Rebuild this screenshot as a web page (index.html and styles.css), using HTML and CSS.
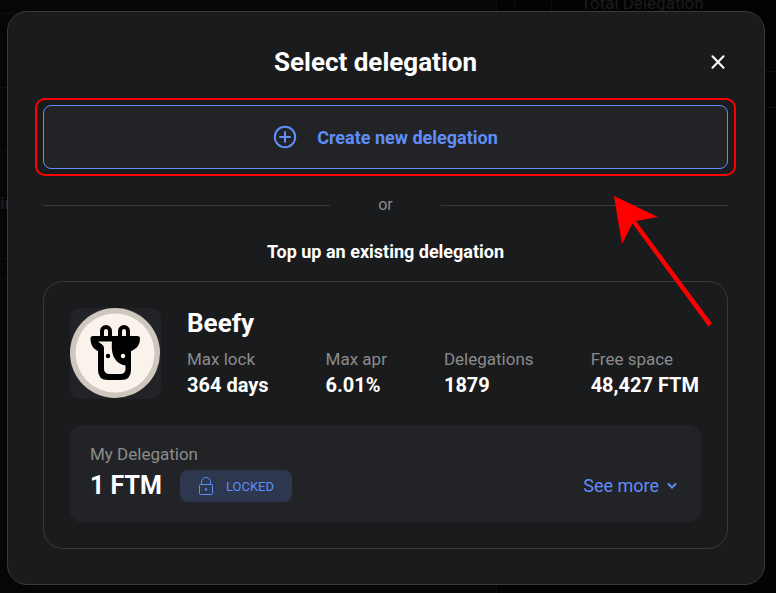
FILE: index.html
```html
<!DOCTYPE html>
<html lang="en">
<head>
    <meta charset="UTF-8">
    <meta name="viewport" content="width=device-width, initial-scale=1.0">
    <title>Select delegation</title>
    <link rel="stylesheet" href="styles.css">
</head>
<body>
    <!-- Dimmed page -->
    <main class="page">
        <div class="page-left">
            <div class="page-row tall"></div>
            <div class="page-row"></div>
            <div class="page-row cell">in</div>
            <div class="page-row"></div>
        </div>
        <div class="page-right">
            <div class="page-panel">
                <div class="page-total">Total Delegation</div>
                <div class="page-line"></div>
            </div>
        </div>
    </main>

    <!-- Modal -->
    <div class="overlay">
        <section class="modal" role="dialog" aria-labelledby="modalTitle">
            <header class="modal-header">
                <h1 id="modalTitle">Select delegation</h1>
                <button class="close-btn" aria-label="Close">
                    <svg width="14" height="14" viewBox="0 0 14 14" fill="none" stroke="#fff" stroke-width="2" stroke-linecap="round">
                        <path d="M1.5 1.2 12.5 12.8M12.5 1.2 1.5 12.8"/>
                    </svg>
                </button>
            </header>

            <div class="highlight">
                <button class="create-btn">
                    <svg width="24" height="24" viewBox="0 0 24 24" fill="none" stroke="currentColor" stroke-width="2" stroke-linecap="round">
                        <circle cx="12" cy="12" r="10.2"/>
                        <path d="M12 7v10M7 12h10"/>
                    </svg>
                    Create new delegation
                </button>
            </div>

            <div class="divider">or</div>

            <h2 class="subtitle">Top up an existing delegation</h2>

            <article class="card">
                <div class="validator">
                    <div class="logo">
                        <svg viewBox="0 0 91 91">
                            <circle cx="45" cy="45" r="45" fill="#cec7be"/>
                            <circle cx="45" cy="45" r="39.5" fill="#faf3ec"/>
                            <path d="M32 30V23a4 4 0 0 1 8 0V30M50 30V23a4 4 0 0 1 8 0V30" fill="none" stroke="#000" stroke-width="4"/>
                            <path d="M23 28H67.5a2.5 2.5 0 0 1 2.5 2.5C70 37 66.500 41 61 43V62Q61 72 51 72H38Q28 72 28 62V43C23.5 41 20.5 37 20.5 30.5A2.5 2.5 0 0 1 23 28Z"/>
                            <path d="M28 33.500H42C41 44 43 55 55.500 57.500V61Q55.500 66 50 66H40Q34 66 34 61V40C34 37 31 36 28 33.500Z" fill="#faf3ec"/>
                            <circle cx="38" cy="48" r="2.2"/>
                            <circle cx="53" cy="48" r="2.2" fill="#faf3ec"/>
                        </svg>
                    </div>
                    <div class="info">
                        <h3>Beefy</h3>
                        <dl class="stats">
                            <div><dt>Max lock</dt><dd>364 days</dd></div>
                            <div><dt>Max apr</dt><dd>6.01%</dd></div>
                            <div><dt>Delegations</dt><dd>1879</dd></div>
                            <div><dt>Free space</dt><dd>48,427 FTM</dd></div>
                        </dl>
                    </div>
                </div>

                <div class="my-delegation">
                    <div>
                        <div class="label">My Delegation</div>
                        <div class="amount">
                            <strong>1 FTM</strong>
                            <span class="badge">
                                <svg width="16" height="20" viewBox="0 0 16 20" fill="none" stroke="currentColor">
                                    <rect x="1.5" y="8.5" width="13" height="10" rx="1"/>
                                    <path d="M3.5 8.5V6a4.5 4.5 0 0 1 9 0V8.500"/>
                                    <circle cx="8" cy="13.500" r="1.2" fill="currentColor" stroke="none"/>
                                </svg>
                                LOCKED
                            </span>
                        </div>
                    </div>
                    <button class="more-btn">
                        See more
                        <svg width="10" height="8" viewBox="0 0 10 8" fill="none" stroke="currentColor" stroke-width="2" stroke-linecap="round">
                            <path d="M1.5 2 5 5.5 8.5 2"/>
                        </svg>
                    </button>
                </div>
            </article>

            <!-- Arrow pointing at the button -->
            <svg class="arrow" width="99" height="131" viewBox="0 0 99 131">
                <path d="M0 0 44 21 22 25 98 127.5 94.5 130.5 18.5 27.5 8 48Z" fill="#f00"/>
            </svg>
        </section>
    </div>
</body>
</html>
```
FILE: styles.css
```css
* {
    box-sizing: border-box;
}

body {
    margin: 0;
    min-height: 100vh;
    background-color: #030304;
    color: #fff;
    font-family: Roboto, "Liberation Sans", sans-serif;
    position: relative;
    overflow: hidden;
}

h1, h2, h3, dl, dd {
    margin: 0;
}

button {
    background: none;
    border: none;
    padding: 0;
    font-family: inherit;
    cursor: pointer;
}

svg {
    display: block;
    flex: none;
}

/* Dimmed page */
.page {
    display: flex;
    min-height: 100vh;
    color: #1c1c1d;
    font-size: 17px;
}

.page-left {
    flex: 0 0 64%;
    padding-top: 13px;
    background-color: #050607;
    border-right: 1px solid #0e0e0f;
}

.page-row {
    height: 63px;
    border-top: 1px solid #0e0e0f;
}

.page-row.tall {
    height: 74px;
}

.page-row.cell {
    height: 109px;
    margin-bottom: 19px;
    padding-top: 42px;
    border-bottom: 1px solid #0e0e0f;
    font-weight: bold;
}

.page-right {
    flex: 1;
    padding-left: 17px;
}

.page-panel {
    height: 200px;
    border-left: 1px solid #0e0e0f;
}

.page-total {
    height: 72px;
    margin-left: 36px;
    padding-left: 29px;
    border-left: 1px solid #0e0e0f;
    border-bottom: 1px solid #0e0e0f;
    line-height: 6px;
}

.page-line {
    height: 36px;
    border-bottom: 1px solid #0e0e0f;
}

/* Modal */
.overlay {
    position: absolute;
    top: 0;
    left: 0;
    right: 0;
    padding: 11px 11px 8px 7px;
}

.modal {
    position: relative;
    padding: 34px 36px 35px 35px;
    background-color: #1a1b1d;
    border: 1px solid #38393b;
    border-radius: 20px;
}

.modal-header {
    display: flex;
    align-items: center;
    margin-bottom: 20px;
}

.modal-header h1 {
    flex: 1;
    text-align: center;
    font-size: 26px;
    line-height: 32px;
}

.close-btn {
    display: flex;
    justify-content: center;
    width: 20px;
}

.highlight {
    margin: 0 -8px;
    padding: 5px 6px;
    border: 2px solid #f00;
    border-radius: 10px;
}

.create-btn {
    display: flex;
    align-items: center;
    justify-content: center;
    gap: 20px;
    width: 100%;
    height: 64px;
    background-color: #222326;
    border: 1px solid #5f8efa;
    border-radius: 8px;
    color: #5f8efa;
    font-size: 18px;
    font-weight: bold;
}

.divider {
    display: flex;
    align-items: center;
    gap: 48px;
    margin-top: 17px;
    color: #8b8b8c;
    font-size: 16px;
    line-height: 24px;
}

.divider::before,
.divider::after {
    content: "";
    flex: 1;
    height: 1px;
    background-color: #38393b;
}

.subtitle {
    margin: 23px 0 17px;
    text-align: center;
    font-size: 18px;
    line-height: 24px;
}

/* Validator card */
.card {
    padding: 26px;
    border: 1px solid #38393b;
    border-radius: 20px;
}

.validator {
    display: flex;
    gap: 26px;
}

.logo {
    flex: none;
    width: 91px;
    height: 91px;
    background-color: #222326;
    border-radius: 10px;
}

.info {
    flex: 1;
    padding-right: 2px;
}

.info h3 {
    margin-bottom: 8px;
    font-size: 26px;
    line-height: 30px;
}

.stats {
    display: flex;
    justify-content: space-between;
}

.stats dt,
.label {
    color: #8b8b8c;
    font-size: 17px;
    line-height: 26px;
}

.stats dd {
    font-size: 20px;
    font-weight: bold;
    line-height: 26px;
}

.my-delegation {
    display: flex;
    align-items: flex-end;
    justify-content: space-between;
    margin-top: 26px;
    padding: 16px 24px 20px 20px;
    background-color: #222326;
    border-radius: 12px;
}

.amount {
    display: flex;
    align-items: center;
    gap: 18px;
    margin-top: 3px;
}

.amount strong {
    font-size: 25px;
    line-height: 32px;
}

.badge {
    display: flex;
    align-items: center;
    justify-content: center;
    gap: 12px;
    height: 32px;
    padding: 0 18px;
    background-color: #2d374e;
    border-radius: 8px;
    color: #5f8efa;
    font-size: 13px;
}

.more-btn {
    display: flex;
    align-items: center;
    gap: 8px;
    color: #5f8efa;
    font-size: 18px;
    line-height: 32px;
}

/* Arrow */
.arrow {
    position: absolute;
    top: 184px;
    right: 51px;
}
```
